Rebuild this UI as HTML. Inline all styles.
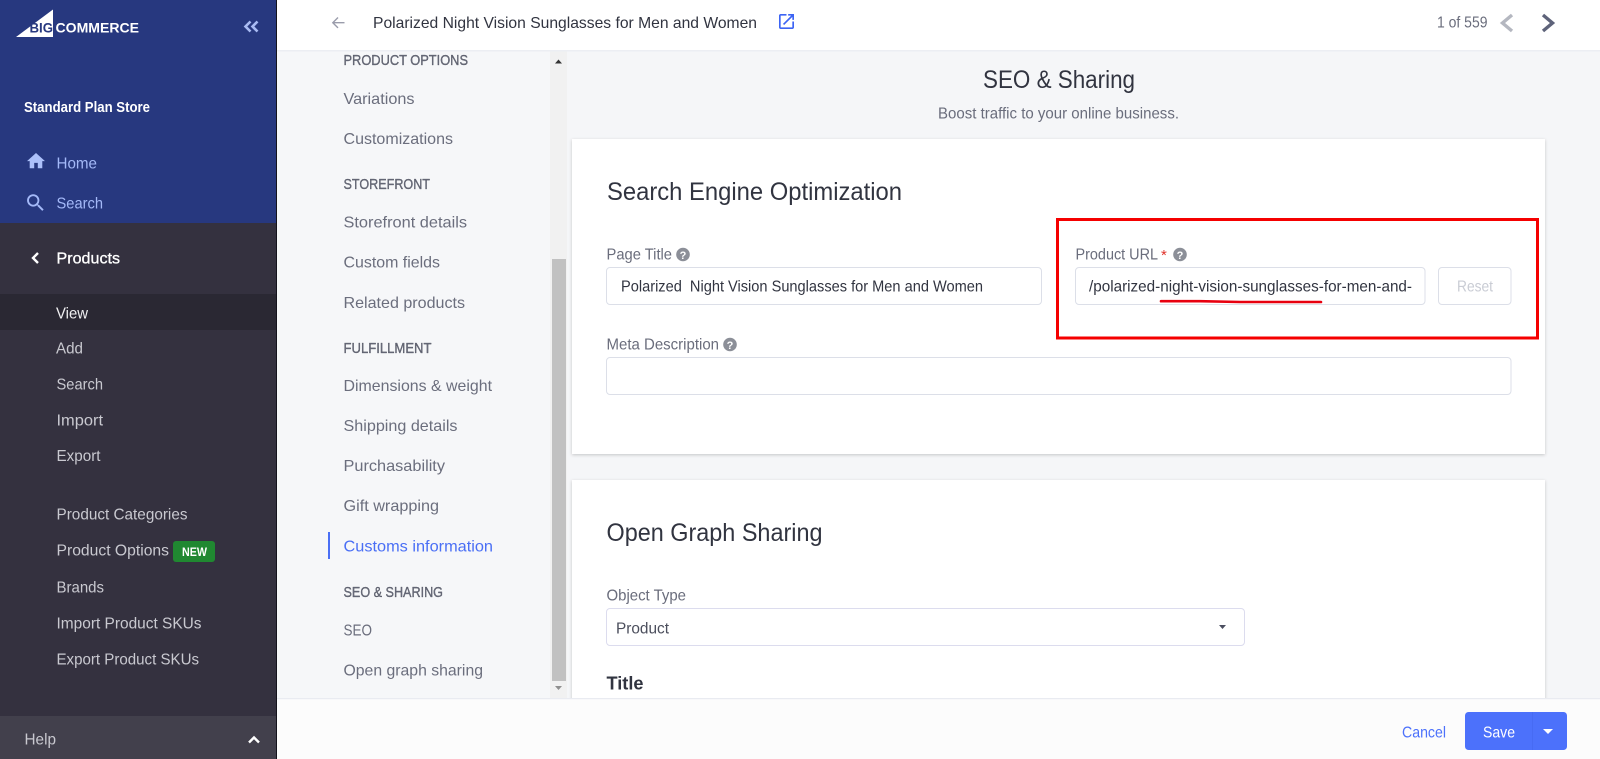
<!DOCTYPE html>
<html lang="en">
<head>
<meta charset="utf-8">
<title>SEO &amp; Sharing</title>
<style>
html,body{margin:0;padding:0;width:1600px;height:759px;overflow:hidden;background:#fff}
svg{display:block}
text{font-family:"Liberation Sans",Arial,sans-serif;font-size:16px;fill:#6a6d7c}
.nav text{fill:#c9c9d0}
.blue text{fill:#a4b9f8}
.sec text{fill:#6b6e7d}
.b{font-weight:bold}
.hd{fill:#313440;font-size:14.500px;stroke:#313440;stroke-width:.25px}
.big{fill:#313440;font-size:25px}
</style>
</head>
<body>
<svg width="1600" height="759" viewBox="0 0 1600 759" xmlns="http://www.w3.org/2000/svg">
<defs>
<filter id="s" x="-2%" y="-5%" width="104%" height="110%"><feDropShadow dx="0" dy="1" stdDeviation="1.5" flood-color="#000" flood-opacity=".2"/></filter>
</defs>

<!-- main backgrounds -->
<rect x="277" y="0" width="1323" height="759" fill="#f5f6f8"/>
<rect x="277" y="51" width="273" height="650" fill="#f6f7f9"/>
<rect x="550" y="51" width="17" height="650" fill="#f1f1f1"/>
<rect x="552" y="259" width="14" height="422" fill="#c1c1c1"/>
<path d="M555 63.500l3.500-4 3.500 4z" fill="#333"/>
<path d="M555 686l3.500 4 3.500-4z" fill="#8f8f8f"/>

<!-- header -->
<rect x="277" y="0" width="1323" height="50" fill="#fff"/>
<rect x="277" y="50" width="1323" height="1.500" fill="#eceef3"/>
<path d="M344.500 22.700H333M338 17.500l-5.200 5.200 5.200 5.200" fill="none" stroke="#9a9cab" stroke-width="1.400"/>
<text x="373" y="28" textLength="384" lengthAdjust="spacingAndGlyphs" style="fill:#313440">Polarized Night Vision Sunglasses for Men and Women</text>
<path transform="translate(776.500 11.500) scale(.833)" fill="#3c64f4" d="M19 19H5V5h7V3H5c-1.110 0-2 .9-2 2v14c0 1.100.89 2 2 2h14c1.100 0 2-.9 2-2v-7h-2v7zM14 3v2h3.590l-9.830 9.830 1.410 1.410L19 6.410V10h2V3h-7z"/>
<text x="1437" y="27.500" textLength="50.500" lengthAdjust="spacingAndGlyphs" style="fill:#6a6d7c;font-size:15.500px">1 of 559</text>
<path d="M1512 15l-9.500 8 9.500 8" fill="none" stroke="#b4b7c0" stroke-width="3.400"/>
<path d="M1543 15l9.500 8-9.500 8" fill="none" stroke="#5e637a" stroke-width="3.400"/>

<!-- secondary nav -->
<g class="sec">
<text class="hd" x="343.500" y="65" textLength="124.500" lengthAdjust="spacingAndGlyphs">PRODUCT OPTIONS</text>
<text class="hd" x="343.500" y="189" textLength="86.500" lengthAdjust="spacingAndGlyphs">STOREFRONT</text>
<text class="hd" x="343.500" y="353" textLength="88" lengthAdjust="spacingAndGlyphs">FULFILLMENT</text>
<text class="hd" x="343.500" y="597" textLength="99.500" lengthAdjust="spacingAndGlyphs">SEO &amp; SHARING</text>
<text x="343.500" y="104" textLength="71" lengthAdjust="spacingAndGlyphs">Variations</text>
<text x="343.500" y="144" textLength="109.500" lengthAdjust="spacingAndGlyphs">Customizations</text>
<text x="343.500" y="227.500" textLength="123.500" lengthAdjust="spacingAndGlyphs">Storefront details</text>
<text x="343.500" y="267.500" textLength="96.500" lengthAdjust="spacingAndGlyphs">Custom fields</text>
<text x="343.500" y="308" textLength="121.500" lengthAdjust="spacingAndGlyphs">Related products</text>
<text x="343.500" y="391" textLength="148.500" lengthAdjust="spacingAndGlyphs">Dimensions &amp; weight</text>
<text x="343.500" y="431" textLength="114" lengthAdjust="spacingAndGlyphs">Shipping details</text>
<text x="343.500" y="471" textLength="101.500" lengthAdjust="spacingAndGlyphs">Purchasability</text>
<text x="343.500" y="511" textLength="95.500" lengthAdjust="spacingAndGlyphs">Gift wrapping</text>
<text x="343.500" y="551.500" textLength="149.500" lengthAdjust="spacingAndGlyphs" style="fill:#4a6ff5">Customs information</text>
<text x="343.500" y="635.500" textLength="28.500" lengthAdjust="spacingAndGlyphs">SEO</text>
<text x="343.500" y="675.500" textLength="139.500" lengthAdjust="spacingAndGlyphs">Open graph sharing</text>
</g>
<rect x="328" y="532" width="2" height="27" fill="#4a6ff5"/>

<!-- page heading -->
<text class="big" x="983" y="88" textLength="152" lengthAdjust="spacingAndGlyphs">SEO &amp; Sharing</text>
<text x="938" y="118.500" textLength="241" lengthAdjust="spacingAndGlyphs" style="fill:#6a6d7c">Boost traffic to your online business.</text>

<!-- card 1 -->
<rect x="572" y="139" width="973" height="315" fill="#fff" filter="url(#s)"/>
<text class="big" x="607" y="200" textLength="295" lengthAdjust="spacingAndGlyphs">Search Engine Optimization</text>

<text x="606.500" y="259.500" textLength="65.500" lengthAdjust="spacingAndGlyphs">Page Title</text>
<circle cx="683" cy="254.500" r="6.800" fill="#8c8f98"/>
<text x="683" y="258.800" text-anchor="middle" style="fill:#fff;font-size:11px;font-weight:bold">?</text>
<rect x="606.500" y="267.500" width="435" height="37" rx="3.500" fill="#fff" stroke="#dcdfe8"/>
<text x="621" y="291.500" textLength="362" lengthAdjust="spacingAndGlyphs" xml:space="preserve" style="fill:#313440">Polarized  Night Vision Sunglasses for Men and Women</text>

<text x="1075.500" y="259.500" textLength="82.500" lengthAdjust="spacingAndGlyphs">Product URL</text>
<text x="1161" y="260" style="fill:#e0322b;font-size:15px">*</text>
<circle cx="1180" cy="254.500" r="6.800" fill="#8c8f98"/>
<text x="1180" y="258.800" text-anchor="middle" style="fill:#fff;font-size:11px;font-weight:bold">?</text>
<rect x="1075.500" y="267.500" width="349.500" height="37" rx="3.500" fill="#fff" stroke="#dcdfe8"/>
<text x="1089" y="291.500" textLength="323" lengthAdjust="spacingAndGlyphs" style="fill:#313440">/polarized-night-vision-sunglasses-for-men-and-</text>
<rect x="1438.500" y="267.500" width="72.500" height="37" rx="3.500" fill="#fff" stroke="#dcdfe8"/>
<text x="1457" y="291.500" textLength="36" lengthAdjust="spacingAndGlyphs" style="fill:#c9ccd4">Reset</text>

<text x="606.500" y="349.500" textLength="112.500" lengthAdjust="spacingAndGlyphs">Meta Description</text>
<circle cx="730" cy="344.500" r="6.800" fill="#8c8f98"/>
<text x="730" y="348.800" text-anchor="middle" style="fill:#fff;font-size:11px;font-weight:bold">?</text>
<rect x="606.500" y="357.500" width="904.500" height="37" rx="3.500" fill="#fff" stroke="#dcdfe8"/>

<!-- annotations -->
<rect x="1057.500" y="219.500" width="480" height="118.500" fill="none" stroke="#f50000" stroke-width="3"/>
<path d="M1161 301.200H1200L1240 302H1321" fill="none" stroke="#e8000f" stroke-width="2.600" stroke-linecap="round"/>

<!-- card 2 -->
<rect x="572" y="480" width="973" height="240" fill="#fff" filter="url(#s)"/>
<text class="big" x="606.500" y="541" textLength="216" lengthAdjust="spacingAndGlyphs">Open Graph Sharing</text>
<text x="606.500" y="600.500" textLength="79.500" lengthAdjust="spacingAndGlyphs">Object Type</text>
<rect x="606.500" y="608.500" width="638" height="37" rx="3.500" fill="#fff" stroke="#dcdcee"/>
<text x="616" y="633.500" textLength="53" lengthAdjust="spacingAndGlyphs" style="fill:#4b4e5c">Product</text>
<path d="M1219 625h7l-3.500 4z" fill="#4b4e60"/>
<text x="606.500" y="689.500" textLength="37" lengthAdjust="spacingAndGlyphs" class="b" style="fill:#313440;font-size:18px">Title</text>

<!-- footer -->
<rect x="277" y="698" width="1323" height="61" fill="#fcfcfc"/>
<rect x="277" y="698" width="1323" height="1.200" fill="#e9ebf1"/>
<text x="1402" y="737.500" textLength="44" lengthAdjust="spacingAndGlyphs" style="fill:#4c71fb">Cancel</text>
<rect x="1465" y="712" width="102" height="38" rx="3.500" fill="#4c71fb"/>
<rect x="1532" y="712" width="1" height="38" fill="#476bf3"/>
<text x="1483" y="737.500" textLength="32" lengthAdjust="spacingAndGlyphs" style="fill:#fff">Save</text>
<path d="M1543 729h10l-5 5z" fill="#fff"/>

<!-- sidebar -->
<rect x="0" y="0" width="276" height="223" fill="#27387f"/>
<rect x="0" y="223" width="276" height="536" fill="#34313f"/>
<rect x="0" y="294" width="276" height="36" fill="#2a2833"/>
<rect x="0" y="716" width="276" height="43" fill="#42404c"/>
<rect x="276" y="0" width="1" height="759" fill="#14131c"/>

<path d="M16 37 53 9.500V37z" fill="#fff"/>
<text x="29.500" y="32.500" textLength="23.500" lengthAdjust="spacingAndGlyphs" class="b" style="fill:#27387f;font-size:13.500px">BIG</text>
<text x="55.500" y="32.500" textLength="83.500" lengthAdjust="spacingAndGlyphs" class="b" style="fill:#fff;font-size:13.500px">COMMERCE</text>
<path d="M250.500 21.500l-5 5 5 5M257.500 21.500l-5 5 5 5" fill="none" stroke="#a9bbf3" stroke-width="2.600"/>

<text x="24" y="112" textLength="126" lengthAdjust="spacingAndGlyphs" class="b" style="fill:#fff;font-size:14.500px">Standard Plan Store</text>

<path transform="translate(25.200 150.300) scale(.9)" fill="#acc0fa" d="M10 20v-6h4v6h5v-8h3L12 3 2 12h3v8z"/>
<path transform="translate(24.200 191.400) scale(.95)" fill="#a4b9f8" d="M15.500 14h-.79l-.28-.27A6.471 6.471 0 0 0 16 9.500 6.500 6.500 0 1 0 9.500 16c1.610 0 3.090-.59 4.230-1.570l.27.28v.79l5 4.990L20.490 19l-4.990-5zm-6 0C7.010 14 5 11.990 5 9.500S7.010 5 9.500 5 14 7.010 14 9.500 11.990 14 9.500 14z"/>
<g class="blue">
<text x="56.500" y="168.500" textLength="40.500" lengthAdjust="spacingAndGlyphs">Home</text>
<text x="56.500" y="208.500" textLength="46.500" lengthAdjust="spacingAndGlyphs">Search</text>
</g>

<path d="M38 253l-5 5 5 5" fill="none" stroke="#fff" stroke-width="2.400"/>
<text x="56.500" y="263.500" textLength="63.500" lengthAdjust="spacingAndGlyphs" style="fill:#fff;stroke:#fff;stroke-width:.3px">Products</text>

<g class="nav">
<text x="56" y="318.500" textLength="32" lengthAdjust="spacingAndGlyphs" style="fill:#f0f0f2">View</text>
<text x="56" y="353.500" textLength="27" lengthAdjust="spacingAndGlyphs">Add</text>
<text x="56.500" y="389.500" textLength="46.500" lengthAdjust="spacingAndGlyphs">Search</text>
<text x="56.500" y="425.500" textLength="46.500" lengthAdjust="spacingAndGlyphs">Import</text>
<text x="56.500" y="461" textLength="44" lengthAdjust="spacingAndGlyphs">Export</text>
<text x="56.500" y="519.500" textLength="131" lengthAdjust="spacingAndGlyphs">Product Categories</text>
<text x="56.500" y="555.500" textLength="112.500" lengthAdjust="spacingAndGlyphs">Product Options</text>
<text x="56.500" y="592.500" textLength="47.500" lengthAdjust="spacingAndGlyphs">Brands</text>
<text x="56.500" y="628.500" textLength="145" lengthAdjust="spacingAndGlyphs">Import Product SKUs</text>
<text x="56.500" y="664.500" textLength="142.500" lengthAdjust="spacingAndGlyphs">Export Product SKUs</text>
<text x="24.500" y="744.500" textLength="31.500" lengthAdjust="spacingAndGlyphs">Help</text>
</g>
<rect x="173" y="541" width="42" height="21" rx="3" fill="#208831"/>
<text x="182" y="556" textLength="25" lengthAdjust="spacingAndGlyphs" class="b" style="fill:#fff;font-size:11.500px">NEW</text>
<path d="M249 742.500l5-5 5 5" fill="none" stroke="#fff" stroke-width="2.400"/>
</svg>
</body>
</html>
